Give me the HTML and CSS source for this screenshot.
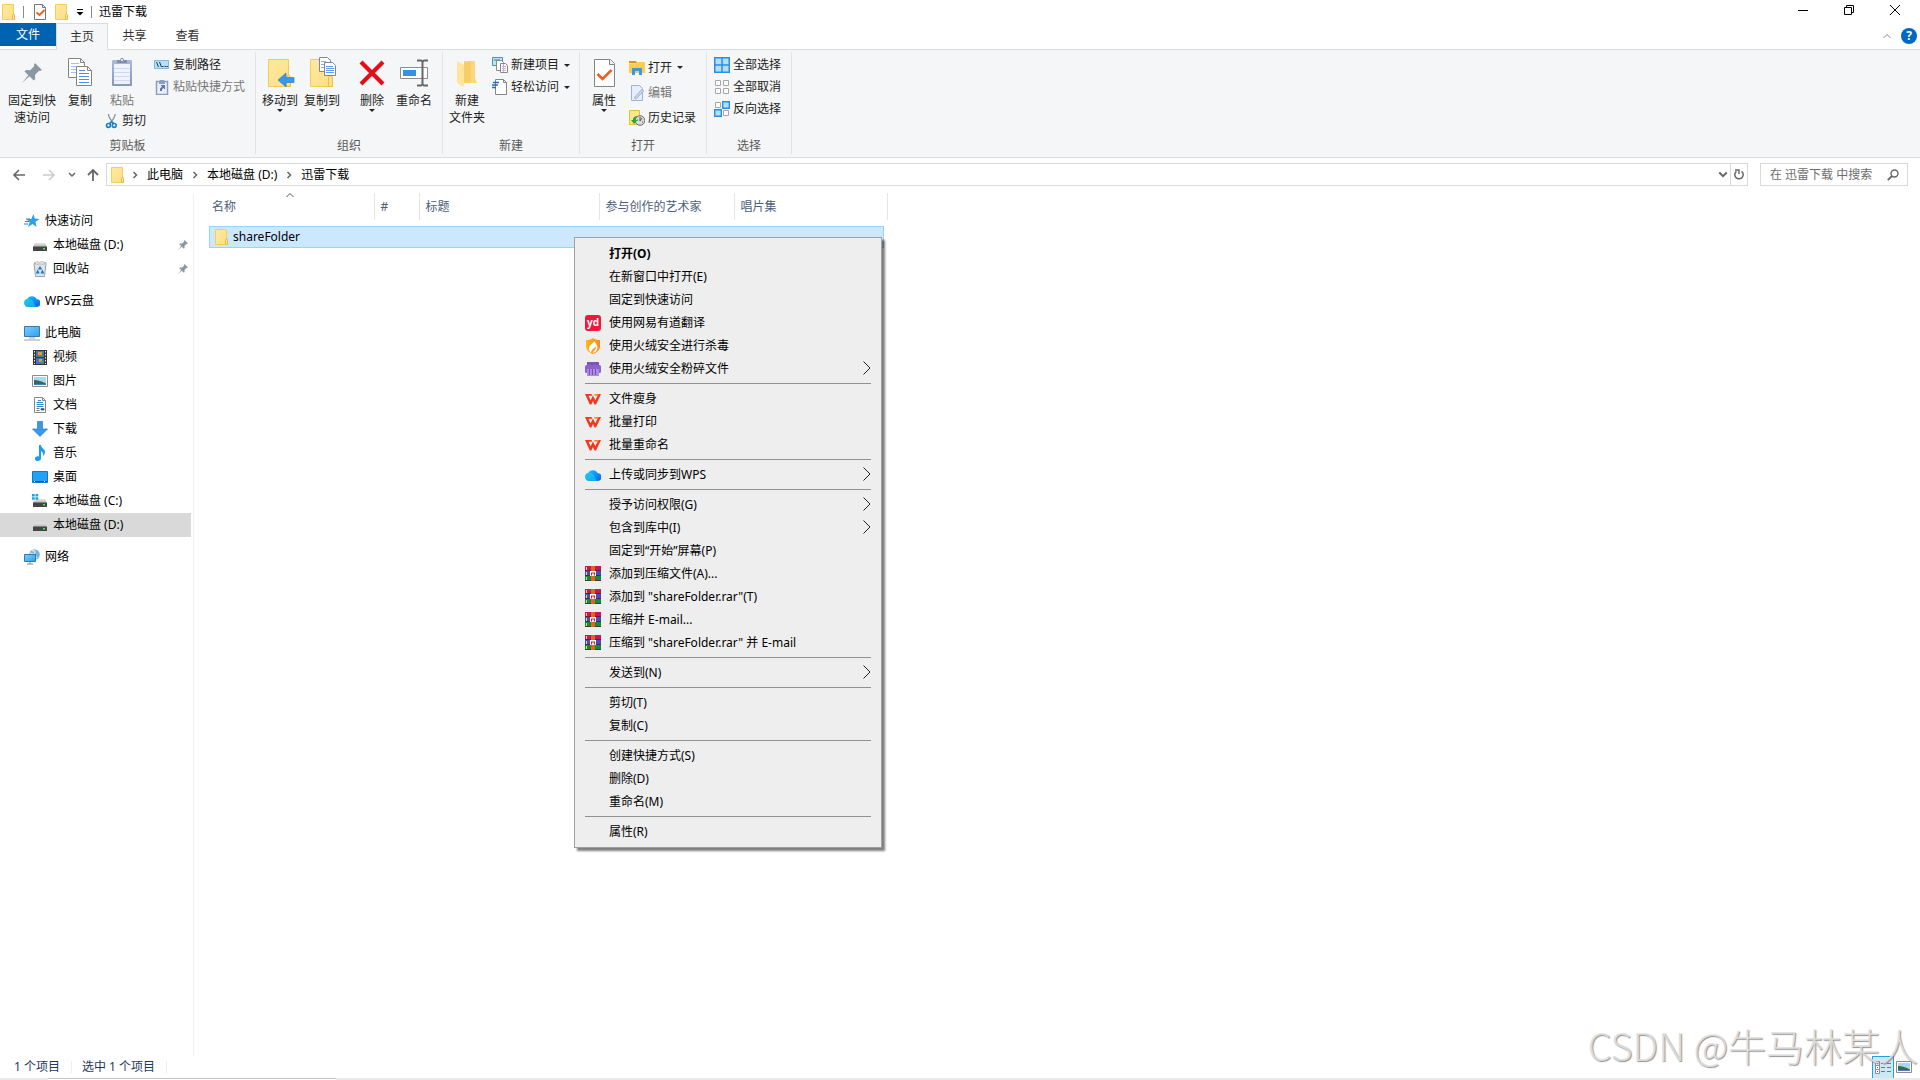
FILE: index.html
```
<!DOCTYPE html>
<html lang="zh-CN">
<head>
    <meta charset="UTF-8">
    <meta name="viewport" content="width=device-width, initial-scale=1.0">
    <title>迅雷下载</title>
    <link rel="stylesheet" href="styles.css">
</head>
<body>
    <!-- Iconos -->
    <svg class="sprite" aria-hidden="true">
        <defs>
            <linearGradient id="gFolder" x1="0" y1="0" x2="1" y2="1"><stop offset="0" stop-color="#ffe9a0"/><stop offset="1" stop-color="#fddf84"/></linearGradient>
            <linearGradient id="gBlue" x1="0" y1="0" x2="1" y2="1"><stop offset="0" stop-color="#7fcdfb"/><stop offset="1" stop-color="#2ba0f0"/></linearGradient>
            <linearGradient id="gCloud" x1="0" y1="0" x2="1" y2="1"><stop offset="0" stop-color="#15c8ff"/><stop offset="1" stop-color="#0a5cf5"/></linearGradient>
            <linearGradient id="gDrive" x1="0" y1="0" x2="0" y2="1"><stop offset="0" stop-color="#e4e4e4"/><stop offset="1" stop-color="#b5b5b5"/></linearGradient>
            <linearGradient id="gShield" x1="0" y1="0" x2="1" y2="0"><stop offset="0" stop-color="#ffb61e"/><stop offset="1" stop-color="#ff8a1c"/></linearGradient>
            <linearGradient id="gPaste" x1="0" y1="0" x2="0" y2="1"><stop offset="0" stop-color="#aabbd8"/><stop offset="1" stop-color="#8396bd"/></linearGradient>
        </defs>
        <symbol id="folder" viewBox="0 0 16 16"><path d="M1.5.5h11v10.500h1v4.500h-12z" fill="url(#gFolder)" stroke="#f2cf5b"/><path d="M11.500 15.500v-4l1-2 1 2v4z" fill="#ffe69a" stroke="#e5bd3e"/></symbol>
        <symbol id="doccheck" viewBox="0 0 16 16"><path d="M2.500.5h8l3 3v12h-11z" fill="#fafafa" stroke="#777"/><path d="M10.500.5v3h3" fill="none" stroke="#777"/><path d="M4.500 8.500l3 2.500 5-5" fill="none" stroke="#f25d1b" stroke-width="1.800"/></symbol>
        <symbol id="pin" viewBox="0 0 20 20"><path d="M13 0l7 7-2 1-1-.3-4 4.200.2 4.100-1.500 1.500-4.200-4.200L0 20l6.300-7.800L2.500 8.500 4 7l4.200.2L12.300 3 12 1.500z" fill="#8b98a3"/></symbol>
        <symbol id="copy" viewBox="0 0 32 32"><path d="M4.500 2.500h12l4 4v15h-16z" fill="#fff" stroke="#858585"/><path d="M16.500 2.500v4h4" fill="none" stroke="#858585"/><path d="M7 7.500h8M7 10.500h11M7 13.500h11M7 16.500h11" stroke="#9cc3f5"/><path d="M12.500 10.500h11l4 4v15h-15z" fill="#fff" stroke="#858585"/><path d="M23.500 10.500v4h4" fill="none" stroke="#858585"/><path d="M15 14.500h6M15 17.500h10M15 20.500h10M15 23.500h10M15 26.500h10" stroke="#4a8ef0"/></symbol>
        <symbol id="paste" viewBox="0 0 32 32"><rect x="6" y="4" width="20" height="26" rx="1" fill="url(#gPaste)"/><path d="M8 8h16v20H8z" fill="#eef3fc"/><path d="M8 12.500h16M8 16.500h16M8 20.500h16M8 24.500h16" stroke="#ccd9ee"/><path d="M11 7V4h3l1-2h2l1 2h3v3z" fill="#7e8fb0"/><circle cx="16" cy="4" r="1" fill="#fff"/></symbol>
        <symbol id="path" viewBox="0 0 16 16"><path d="M.5 3.500h14v8H.5z" fill="#b5e0fa" stroke="#81b8da"/><path d="M2.500 5l2 5M5.500 5l2 5M8 9.500h1.500M10.500 9.500H12M12.500 9.500H14" stroke="#223a55"/></symbol>
        <symbol id="pastelink" viewBox="0 0 16 16"><path d="M2.500 2.500h11v13h-11z" fill="#e9effa" stroke="#8b9ec2" stroke-width="1.500"/><path d="M5 3l1-2h4l1 2v2H5z" fill="#8b9ec2"/><path d="M6 12V9.500l2-2L6.500 6H11v4.500L9.500 9 8 10.500V12z" fill="#5f77ab"/></symbol>
        <symbol id="cut" viewBox="0 0 16 18"><path d="M4 1c0 4 3 7 6 11M11.500 1c0 4-3 7-6 11" fill="none" stroke="#8b98a3" stroke-width="1.500"/><g fill="none" stroke="#1b7fc1" stroke-width="1.800"><circle cx="4" cy="14" r="2.200"/><circle cx="10.500" cy="14" r="2.200"/><path d="M5 12l2.500-2 2 2"/></g></symbol>
        <symbol id="bigfolder" viewBox="0 0 32 32"><path d="M4.500 3.500h20v22h2v5h-22z" fill="url(#gFolder)" stroke="#f0cb58"/><path d="M22.500 30.500v-9l2-3 2 3v9z" fill="#ffe08a" stroke="#e7bf42"/></symbol>
        <symbol id="moveto" viewBox="0 0 32 32"><use href="#bigfolder"/><path d="M14 24l8-7v4.500h8v5h-8V31z" fill="#3b97e8" stroke="#2676bf" stroke-width=".6"/></symbol>
        <symbol id="copyto" viewBox="0 0 32 32"><use href="#bigfolder"/><path d="M13.500 1.500h8l3 3v11h-11z" fill="#fff" stroke="#7d8791"/><path d="M15 5.500h5M15 8.500h4M15 11.500h4" stroke="#7daef3"/><path d="M18.500 6.500h8l3 3v10h-11z" fill="#fff" stroke="#7d8791"/><path d="M20 10.500h7M20 12.500h8M20 14.500h8M20 16.500h8" stroke="#5b9bf2"/></symbol>
        <symbol id="delete" viewBox="0 0 32 32"><path d="M5 6l22 22M27 6L5 28" stroke="#e30f17" stroke-width="4.200"/></symbol>
        <symbol id="rename" viewBox="0 0 32 32"><path d="M2.500 11.500h27v11h-27z" fill="#fff" stroke="#8c8c8c"/><path d="M5 14h13v6H5z" fill="#3391e6"/><path d="M19 4.500h4l1.500 1 1.500-1h4M19 29.500h4l1.500-1 1.500 1h4M24.500 5v24" fill="none" stroke="#666" stroke-width="2"/></symbol>
        <symbol id="newfolder" viewBox="0 0 32 32"><path d="M13 5h11v17l2 5H13z" fill="#fbd67c"/><path d="M13 7l7-2v21l-7 1z" fill="#f8cd68"/><path d="M6 5l7 4v20l-1 2-6-4z" fill="#fee59b"/></symbol>
        <symbol id="newitem" viewBox="0 0 16 16"><path d="M.5.5h10v8H.5z" fill="#bfe3f5" stroke="#4b93b8"/><path d="M2 3h6" stroke="#3c7798"/><path d="M4.500 3.500h5l2 2v8h-7z" fill="#fff" stroke="#888"/><path d="M8.500 6.500h5l2 2v7h-7z" fill="#fff" stroke="#888"/><path d="M10 9.500h4M10 11.500h4M10 13.500h4" stroke="#a7bfea"/><path d="M11.500 7v8" stroke="#f1a8a8"/></symbol>
        <symbol id="easy" viewBox="0 0 16 16"><path d="M3.500.5h8l3 3v12h-11z" fill="#fff" stroke="#858585"/><path d="M11.500.5v3h3" fill="none" stroke="#858585"/><path d="M1 3.500h6M0 6h6M0 8.500h4" stroke="#1f72b8" stroke-width="1.400"/></symbol>
        <symbol id="props" viewBox="0 0 32 32"><path d="M6.500 3.500h16l4 4v23h-20z" fill="#fff" stroke="#858585"/><path d="M21.500 3.500v5h5" fill="#eee" stroke="#858585"/><path d="M9.500 18l5 5 9-9" fill="none" stroke="#f25d1b" stroke-width="2.500"/></symbol>
        <symbol id="open" viewBox="0 0 16 16"><path d="M0 1h7l1 2h-8z" fill="#d59a12"/><path d="M0 3.500L8 3l1-1h7v11H0z" fill="#fecb52"/><path d="M3 15V8h10v7h-3v-4H6v4z" fill="#3b97e8"/></symbol>
        <symbol id="edit" viewBox="0 0 16 16"><path d="M2.500.5h8l3 3v12h-11z" fill="#e6eefb" stroke="#9fb1d4"/><path d="M5 13l8-9 2 2-8 8z" fill="#c5d2e9" stroke="#93a6cb" stroke-width=".7"/></symbol>
        <symbol id="history" viewBox="0 0 16 16"><path d="M.5.5h10v14H.5z" fill="#fde58c" stroke="#e4bc3f"/><circle cx="11" cy="10.500" r="4.800" fill="#dadada" stroke="#6a6a6a"/><path d="M11 7v4l2-3M8 10h1M13 12h1" fill="none" stroke="#555"/><path d="M2 10h2c0-3 2-4 5-4-2 1-3 2-2.500 4h2L5 14z" fill="#29a636"/></symbol>
        <symbol id="selall" viewBox="0 0 16 16"><path d="M.75.75h14.500v14.500H.75zM8 1v14M1 8h14" fill="#b3defc" stroke="#2b8fde" stroke-width="1.500"/></symbol>
        <symbol id="selnone" viewBox="0 0 16 16"><path d="M1.500 1.500h5v5h-5zM9.500 1.500h5v5h-5zM1.500 9.500h5v5h-5zM9.500 9.500h5v5h-5z" fill="#fff" stroke="#a6a6a6"/></symbol>
        <symbol id="selinv" viewBox="0 0 16 16"><path d="M1.500 1.500h5v5h-5zM9.500 9.500h5v5h-5z" fill="#fff" stroke="#a6a6a6"/><path d="M8.700.7h6.600v6.600H8.700zM.7 8.700h6.600v6.600H.7z" fill="#b3defc" stroke="#2b8fde" stroke-width="1.400"/></symbol>
        <symbol id="left" viewBox="0 0 14 14"><path d="M7 2L2 7l5 5M2 7h11" fill="none" stroke="currentColor" stroke-width="1.600"/></symbol>
        <symbol id="right" viewBox="0 0 14 14"><path d="M7 2l5 5-5 5M12 7H1" fill="none" stroke="currentColor" stroke-width="1.600"/></symbol>
        <symbol id="up" viewBox="0 0 14 14"><path d="M2 7l5-5 5 5M7 2v11" fill="none" stroke="currentColor" stroke-width="1.800"/></symbol>
        <symbol id="chevdown" viewBox="0 0 8 8"><path d="M1 2l3 3 3-3" fill="none" stroke="currentColor" stroke-width="1.500"/></symbol>
        <symbol id="chevup" viewBox="0 0 8 8"><path d="M.5 6L4 2.500 7.500 6" fill="none" stroke="currentColor"/></symbol>
        <symbol id="chevright" viewBox="0 0 8 8"><path d="M2.500 1l3 3-3 3" fill="none" stroke="currentColor" stroke-width="1.500"/></symbol>
        <symbol id="submenu" viewBox="0 0 8 14"><path d="M.5.5L7 7 .5 13.500" fill="none" stroke="#222"/></symbol>
        <symbol id="refresh" viewBox="0 0 12 12"><path d="M8.500 2.300A4.200 4.200 0 1 1 3.500 2.300" fill="none" stroke="#666" stroke-width="1.500"/><path d="M2 1h4v4" fill="none" stroke="#666" stroke-width="1.400"/></symbol>
        <symbol id="search" viewBox="0 0 12 12"><circle cx="7.500" cy="4.500" r="3.500" fill="none" stroke="#666" stroke-width="1.400"/><path d="M5 7L.8 11.200" stroke="#666" stroke-width="1.800"/></symbol>
        <symbol id="star" viewBox="0 0 16 16"><path d="M9.500 1l1.300 4.500L15.500 6l-4 2.800 1 5.200-4-3-4.500 3 1.700-5L2.500 6h4.800z" fill="#2ba1ec"/><path d="M1 8.500h4M0 11h4M2 6h4" stroke="#2684c9"/></symbol>
        <symbol id="drive" viewBox="0 0 16 16"><path d="M3 6h10l2 4H1z" fill="url(#gDrive)"/><path d="M1 9.500h14v4.500H1z" fill="#454545"/><path d="M11 11h2v1.500h-2z" fill="#3bea4b"/></symbol>
        <symbol id="drivec" viewBox="0 0 16 16"><use href="#drive"/><path d="M0 1h6v6H0z" fill="#fff"/><path d="M0 1h2.700v2.500H0zM3.500 1h2.700v2.500H3.500zM0 4.300h2.700v2.500H0zM3.500 4.300h2.700v2.500H3.500z" fill="#15a5e8"/></symbol>
        <symbol id="bin" viewBox="0 0 16 16"><path d="M2 2.500L14 2l-1.500 13.500h-9z" fill="#dce3e9" stroke="#9aa3aa"/><path d="M2 2l3-1.500 2 1 3-1 4 1.500-2 1H4z" fill="#eef1f3" stroke="#a5a5a5" stroke-width=".7"/><path d="M8 5l2.200 3.500H5.800zM5.700 8.500l2 4H3.800zM10.300 8.500l2 4H8.500z" fill="#1c76c9"/></symbol>
        <symbol id="cloud" viewBox="0 0 16 16"><path d="M4.200 14a4.200 4.200 0 0 1-.7-8.300A5.200 5.200 0 0 1 12.500 6a4 4 0 0 1 0 8z" fill="url(#gCloud)"/><path d="M3.800 5.700c2.500-.3 4.500 1 5.500 3.300s2 4 3 5H4.200a4.200 4.200 0 0 1-.4-8.300z" fill="#1de0dc" opacity=".5"/></symbol>
        <symbol id="pc" viewBox="0 0 16 16"><path d="M.5 1.500h15v10H.5z" fill="url(#gBlue)" stroke="#3479a8"/><path d="M5 13h6M0 15h16" stroke="#93a5b2"/></symbol>
        <symbol id="video" viewBox="0 0 16 16"><path d="M1 1h14v15H1z" fill="#333"/><path d="M4 2h8v6H4zM4 9h8v6H4z" fill="#4573c8"/><path d="M6 3h4v3H6zM7 10h3v3H7z" fill="#e2a02a"/><path d="M7 6h4v2H7zM9 12h3v2H9z" fill="#4b9a44"/><path d="M2.500 2v13M13.500 2v13" stroke="#eee" stroke-dasharray="1.500 1.500"/></symbol>
        <symbol id="picture" viewBox="0 0 16 16"><path d="M.5 2.500h15v11H.5z" fill="#fff" stroke="#8c8c8c"/><path d="M2 4h12v8H2z" fill="#a5daf6"/><path d="M2 7c4 0 8 1.500 12 3.500v.5H2z" fill="#3c665c"/><path d="M2 11h12v1H2z" fill="#3f83b8"/></symbol>
        <symbol id="doc" viewBox="0 0 16 16"><path d="M2.500.5h8l3 3v12h-11z" fill="#fff" stroke="#858585"/><path d="M10.500.5v3h3" fill="none" stroke="#858585"/><path d="M6 3.500h3M4.500 5.500H11M4.500 7.500h7M4.500 9.500h7" stroke="#2a8bd6"/><path d="M4.500 11.500h3M4.500 13.500h3M9 11.500h3v1.500H9z" stroke="#62788a"/></symbol>
        <symbol id="download" viewBox="0 0 16 16"><path d="M5.500.5h5V8h5L8 15.500.5 8h5z" fill="#3b97e8" stroke="#2b78c0" stroke-width=".7"/></symbol>
        <symbol id="music" viewBox="0 0 16 16"><path d="M7 0h2c0 3 4 4 4 7 0 2-1 3-2 4 .5-3-.5-4-2-5v7.500C9 15 7.500 16 5.500 16S3 15 3 13.500 5 11 7 11.500z" fill="#1a9cf0"/></symbol>
        <symbol id="desktop" viewBox="0 0 16 16"><path d="M.5 2.500h15v11H.5z" fill="#23a1f7" stroke="#0e79c9"/><path d="M1 12.500h14" stroke="#0b5e9c"/><path d="M2 12.500h1M12 12.500h1" stroke="#fff"/></symbol>
        <symbol id="network" viewBox="0 0 16 16"><circle cx="10.500" cy="5.500" r="5.300" fill="#76b4d9"/><path d="M8 2c3-1 4 1 2 3s2 2 3 4M6 4l3 1" stroke="#d9ebf5" fill="none" stroke-width="1.300"/><path d="M.5 5.500h11v7H.5z" fill="url(#gBlue)" stroke="#3479a8"/><path d="M3 15h6M6 13v2" stroke="#6f8c9f"/></symbol>
        <symbol id="flame" viewBox="0 0 16 16"><path d="M1 2c3 0 5-.5 7-2 2 1.500 4 2 7 2v6c0 4-3 6.500-7 8-4-1.500-7-4-7-8z" fill="url(#gShield)"/><path d="M9 3c0 2-4.500 4-5 7-.3 2 .5 3.500 2 4.500 0-2 2-4 5-6C11 11 9 13 7.500 15c3-.5 5-2.500 5-5.500C12.500 7 10.500 5 9 3z" fill="#fff"/></symbol>
        <symbol id="shred" viewBox="0 0 16 16"><path d="M2 1h12v5H2z" fill="#7c54b8"/><rect y="4" width="16" height="8" rx="1.500" fill="#8c62cb"/><path d="M2 8h12v7H2z" fill="#ad8ae4"/><path d="M4.500 8v6M7.500 8v6M10.500 8v6" stroke="#7a52b6"/></symbol>
        <symbol id="wps" viewBox="0 0 16 16"><path d="M0 3h6.500l1 1.700h-4L5.600 9.300 8 4.500l2.300 4.800L13.400 3H16l-5 10.500h-1.500L8 10l-1.700 3.500H4.800z" fill="#f5361c"/><path d="M9 3h5l-1 1.700h-3.200z" fill="#ff8530"/></symbol>
        <symbol id="rar" viewBox="0 0 16 16"><path d="M0 0h16v5H0z" fill="#c2185b"/><path d="M0 5h16v5H0z" fill="#3f51b5"/><path d="M0 10h16v5H0z" fill="#158a3e"/><path d="M0 4.500h16M0 9.500h16M0 14.500h16" stroke="#4a1733" stroke-width=".7"/><path d="M1.500 1v3M1.500 6v3M1.500 11v3" stroke="#f2d64b"/><path d="M6 0h4v15H6z" fill="#e0641c"/><path d="M5 5h6v5H5z" fill="#fff"/><path d="M6.500 9.500V7h3v2.500" fill="none" stroke="#c62828" stroke-width="1.200"/></symbol>
    </svg>

    <header class="titlebar">
        <svg class="icon"><use href="#folder"/></svg>
        <span class="title-sep"></span>
        <button class="quick" aria-label="属性"><svg class="icon"><use href="#doccheck"/></svg></button>
        <button class="quick" aria-label="新建文件夹"><svg class="icon"><use href="#folder"/></svg></button>
        <button aria-label="自定义"><svg width="8" height="8" viewBox="0 0 8 8"><path d="M1 1.500h6" stroke="#000"/><path d="M.5 4h7L4 7.500z"/></svg></button>
        <span class="title-sep near"></span>
        <span class="title">迅雷下载</span>
        <div class="controls">
            <button aria-label="最小化"><svg width="10" height="10"><path d="M0 5.500h10" stroke="#000"/></svg></button>
            <button aria-label="还原"><svg width="10" height="10"><path d="M.5 2.500h7v7h-7zM2.500 2.500v-2h7v7h-2" fill="none" stroke="#000"/></svg></button>
            <button aria-label="关闭"><svg width="10" height="10"><path d="M0 0l10 10M10 0L0 10" stroke="#000"/></svg></button>
        </div>
    </header>

    <nav class="tabs">
        <button class="tab file">文件</button>
        <button class="tab active">主页</button>
        <button class="tab">共享</button>
        <button class="tab">查看</button>
        <div class="help">
            <button aria-label="折叠功能区"><svg class="icon-8"><use href="#chevup"/></svg></button>
            <button class="help-btn" aria-label="帮助">?</button>
        </div>
    </nav>

    <section class="ribbon">
        <div class="group g-clip">
            <div class="group-body">
                <button class="big wide"><svg class="big-icon" viewBox="0 0 32 32"><use href="#pin" x="6" y="7" width="20" height="20"/></svg>固定到快<br>速访问</button>
                <button class="big"><svg class="big-icon"><use href="#copy"/></svg>复制</button>
                <div class="stack">
                    <button class="big off"><svg class="big-icon"><use href="#paste"/></svg>粘贴</button>
                    <button class="small cut"><svg class="icon"><use href="#cut"/></svg>剪切</button>
                </div>
                <div class="list">
                    <button class="small"><svg class="icon"><use href="#path"/></svg>复制路径</button>
                    <button class="small off"><svg class="icon"><use href="#pastelink"/></svg>粘贴快捷方式</button>
                </div>
            </div>
            <div class="group-name">剪贴板</div>
        </div>
        <div class="group g-org">
            <div class="group-body">
                <button class="big"><svg class="big-icon"><use href="#moveto"/></svg>移动到<i class="arrow"></i></button>
                <button class="big"><svg class="big-icon"><use href="#copyto"/></svg>复制到<i class="arrow"></i></button>
                <span class="inner-sep"></span>
                <button class="big"><svg class="big-icon"><use href="#delete"/></svg>删除<i class="arrow"></i></button>
                <button class="big"><svg class="big-icon"><use href="#rename"/></svg>重命名</button>
            </div>
            <div class="group-name">组织</div>
        </div>
        <div class="group g-new">
            <div class="group-body">
                <button class="big"><svg class="big-icon"><use href="#newfolder"/></svg>新建<br>文件夹</button>
                <div class="list">
                    <button class="small"><svg class="icon"><use href="#newitem"/></svg>新建项目<i class="arrow"></i></button>
                    <button class="small"><svg class="icon"><use href="#easy"/></svg>轻松访问<i class="arrow"></i></button>
                </div>
            </div>
            <div class="group-name">新建</div>
        </div>
        <div class="group g-open">
            <div class="group-body">
                <button class="big"><svg class="big-icon"><use href="#props"/></svg>属性<i class="arrow"></i></button>
                <div class="list loose">
                    <button class="small"><svg class="icon"><use href="#open"/></svg>打开<i class="arrow"></i></button>
                    <button class="small off"><svg class="icon"><use href="#edit"/></svg>编辑</button>
                    <button class="small"><svg class="icon"><use href="#history"/></svg>历史记录</button>
                </div>
            </div>
            <div class="group-name">打开</div>
        </div>
        <div class="group g-select">
            <div class="group-body">
                <div class="list">
                    <button class="small"><svg class="icon"><use href="#selall"/></svg>全部选择</button>
                    <button class="small"><svg class="icon"><use href="#selnone"/></svg>全部取消</button>
                    <button class="small"><svg class="icon"><use href="#selinv"/></svg>反向选择</button>
                </div>
            </div>
            <div class="group-name">选择</div>
        </div>
    </section>

    <div class="addressbar">
        <div class="history">
            <button aria-label="后退"><svg class="icon-14"><use href="#left"/></svg></button>
            <button class="dim" aria-label="前进"><svg class="icon-14"><use href="#right"/></svg></button>
            <button class="recent" aria-label="最近浏览的位置"><svg class="icon-8"><use href="#chevdown"/></svg></button>
            <button aria-label="上移"><svg class="icon-14"><use href="#up"/></svg></button>
        </div>
        <div class="path">
            <svg class="icon"><use href="#folder"/></svg>
            <svg class="icon-8"><use href="#chevright"/></svg>
            <a href="#">此电脑</a>
            <svg class="icon-8"><use href="#chevright"/></svg>
            <a href="#">本地磁盘 (D:)</a>
            <svg class="icon-8"><use href="#chevright"/></svg>
            <a href="#">迅雷下载</a>
            <button class="drop" aria-label="以前的位置"><svg width="10" height="10"><use href="#chevdown"/></svg></button>
            <button class="refresh" aria-label="刷新"><svg width="12" height="12"><use href="#refresh"/></svg></button>
        </div>
        <form class="search">
            <input type="text" aria-label="搜索" placeholder="在 迅雷下载 中搜索">
            <svg width="12" height="12"><use href="#search"/></svg>
        </form>
    </div>

    <main class="main">
        <nav class="tree">
            <ul>
                <li><a href="#"><svg class="icon"><use href="#star"/></svg>快速访问</a></li>
                <li class="sub"><a href="#"><svg class="icon"><use href="#drive"/></svg>本地磁盘 (D:)<svg class="pinned"><use href="#pin"/></svg></a></li>
                <li class="sub"><a href="#"><svg class="icon"><use href="#bin"/></svg>回收站<svg class="pinned"><use href="#pin"/></svg></a></li>
            </ul>
            <ul>
                <li><a href="#"><svg class="icon"><use href="#cloud"/></svg>WPS云盘</a></li>
            </ul>
            <ul>
                <li><a href="#"><svg class="icon"><use href="#pc"/></svg>此电脑</a></li>
                <li class="sub"><a href="#"><svg class="icon"><use href="#video"/></svg>视频</a></li>
                <li class="sub"><a href="#"><svg class="icon"><use href="#picture"/></svg>图片</a></li>
                <li class="sub"><a href="#"><svg class="icon"><use href="#doc"/></svg>文档</a></li>
                <li class="sub"><a href="#"><svg class="icon"><use href="#download"/></svg>下载</a></li>
                <li class="sub"><a href="#"><svg class="icon"><use href="#music"/></svg>音乐</a></li>
                <li class="sub"><a href="#"><svg class="icon"><use href="#desktop"/></svg>桌面</a></li>
                <li class="sub"><a href="#"><svg class="icon"><use href="#drivec"/></svg>本地磁盘 (C:)</a></li>
                <li class="sub"><a href="#" class="current"><svg class="icon"><use href="#drive"/></svg>本地磁盘 (D:)</a></li>
            </ul>
            <ul>
                <li><a href="#"><svg class="icon"><use href="#network"/></svg>网络</a></li>
            </ul>
        </nav>

        <div class="files">
            <table>
                <colgroup>
                    <col class="c-name"><col class="c-num"><col class="c-title"><col class="c-artist"><col class="c-album">
                </colgroup>
                <thead>
                    <tr>
                        <th>名称<svg class="sort"><use href="#chevup"/></svg></th>
                        <th>#</th>
                        <th>标题</th>
                        <th>参与创作的艺术家</th>
                        <th>唱片集</th>
                    </tr>
                </thead>
                <tbody>
                    <tr>
                        <td colspan="5"><div class="file-row"><svg class="icon"><use href="#folder"/></svg>shareFolder</div></td>
                    </tr>
                </tbody>
            </table>
        </div>
    </main>

    <footer class="status">
        <span>1 个项目</span>
        <span>选中 1 个项目</span>
        <div class="views">
            <button class="on" aria-label="详细信息"><svg width="16" height="14"><path d="M.5.5h4v4h-4zM.5 4.500h4v4h-4zM.5 8.500h4v4h-4z" fill="#fff" stroke="#8c8c8c"/><path d="M2 2.500h1M2 6.500h1" stroke="#2a6fc0"/><path d="M2 10.500h1" stroke="#d22"/><path d="M6 2.500h4M12 2.500h4M6 6.500h4M12 6.500h4M6 10.500h4M12 10.500h4" stroke="#777"/></svg></button>
            <button aria-label="大图标"><svg class="icon"><use href="#picture"/></svg></button>
        </div>
    </footer>
    <div class="bottom-edge"><span></span></div>

    <!-- Menú contextual -->
    <div class="menu" role="menu">
        <button><b>打开(O)</b></button>
        <button>在新窗口中打开(E)</button>
        <button>固定到快速访问</button>
        <button><span class="yd">yd</span>使用网易有道翻译</button>
        <button><svg class="icon"><use href="#flame"/></svg>使用火绒安全进行杀毒</button>
        <button><svg class="icon"><use href="#shred"/></svg>使用火绒安全粉碎文件<svg class="more"><use href="#submenu"/></svg></button>
        <hr>
        <button><svg class="icon"><use href="#wps"/></svg>文件瘦身</button>
        <button><svg class="icon"><use href="#wps"/></svg>批量打印</button>
        <button><svg class="icon"><use href="#wps"/></svg>批量重命名</button>
        <hr>
        <button><svg class="icon"><use href="#cloud"/></svg>上传或同步到WPS<svg class="more"><use href="#submenu"/></svg></button>
        <hr>
        <button>授予访问权限(G)<svg class="more"><use href="#submenu"/></svg></button>
        <button>包含到库中(I)<svg class="more"><use href="#submenu"/></svg></button>
        <button>固定到“开始”屏幕(P)</button>
        <button><svg class="icon"><use href="#rar"/></svg>添加到压缩文件(A)...</button>
        <button><svg class="icon"><use href="#rar"/></svg>添加到 "shareFolder.rar"(T)</button>
        <button><svg class="icon"><use href="#rar"/></svg>压缩并 E-mail...</button>
        <button><svg class="icon"><use href="#rar"/></svg>压缩到 "shareFolder.rar" 并 E-mail</button>
        <hr>
        <button>发送到(N)<svg class="more"><use href="#submenu"/></svg></button>
        <hr>
        <button>剪切(T)</button>
        <button>复制(C)</button>
        <hr>
        <button>创建快捷方式(S)</button>
        <button>删除(D)</button>
        <button>重命名(M)</button>
        <hr>
        <button>属性(R)</button>
    </div>

    <div class="watermark">CSDN @牛马林某人</div>
</body>
</html>
```
FILE: styles.css
```
* {
    box-sizing: border-box;
}
body {
    margin: 0;
    min-height: 100vh;
    display: flex;
    flex-direction: column;
    position: relative;
    background: #fff;
    color: #000;
    font: 12px/16px "Noto Sans", "Noto Sans CJK SC", sans-serif;
}
button {
    font: inherit;
    color: inherit;
    background: none;
    border: none;
    padding: 0;
    white-space: nowrap;
}
a {
    color: inherit;
    text-decoration: none;
}
svg {
    display: block;
    flex: none;
}
.sprite {
    position: absolute;
    width: 0;
    height: 0;
}
.icon {
    width: 16px;
    height: 16px;
}
.icon-14 {
    width: 14px;
    height: 14px;
}
.icon-8 {
    width: 8px;
    height: 8px;
}

/* Barra de título */
.titlebar {
    display: flex;
    align-items: center;
    height: 23px;
    padding-left: 1px;
}
.title-sep {
    width: 1px;
    height: 12px;
    margin: 0 8px 0 6px;
    background: #8a8a8a;
}
.title-sep.near {
    margin: 0 7px;
}
.quick {
    margin-right: 6px;
}
.controls {
    display: flex;
    align-self: flex-start;
    margin-left: auto;
    padding-right: 2px;
}
.controls button {
    display: flex;
    align-items: center;
    justify-content: center;
    width: 46px;
    height: 20px;
}

/* Pestañas */
.tabs {
    display: flex;
    height: 27px;
    border-bottom: 1px solid #dadbdc;
}
.tab {
    width: 53px;
    height: 26px;
    color: #333;
}
.tab.file {
    width: 56px;
    height: 23px;
    background: #0063b1;
    color: #fff;
}
.tab.active {
    width: 52px;
    height: 27px;
    background: #f5f6f7;
    border: 1px solid #dadbdc;
    border-bottom: none;
}
.help {
    display: flex;
    align-items: center;
    gap: 10px;
    margin-left: auto;
    padding-right: 3px;
    color: #888;
}
.help-btn {
    width: 16px;
    height: 16px;
    border-radius: 8px;
    background: #0067c4;
    color: #fff;
    font-weight: bold;
    line-height: 16px;
}

/* Cinta de opciones */
.ribbon {
    display: flex;
    height: 108px;
    padding-top: 2px;
    background: #f5f6f7;
    border-bottom: 1px solid #dadbdc;
    color: #222;
}
.group {
    display: flex;
    flex-direction: column;
    height: 102px;
    border-right: 1px solid #e2e3e4;
}
.group-body {
    display: flex;
    flex: 1;
    padding: 2px 6px 0;
}
.group-name {
    height: 16px;
    color: #5a5a5a;
    text-align: center;
}
.g-clip {
    width: 256px;
}
.g-clip .group-body {
    padding-left: 8px;
}
.g-org {
    width: 187px;
}
.g-new {
    width: 137px;
}
.g-open {
    width: 127px;
}
.g-select {
    width: 85px;
}
.g-select .group-body {
    padding-left: 7px;
}
.big {
    display: flex;
    flex-direction: column;
    align-items: center;
    align-self: flex-start;
    min-width: 36px;
    padding-top: 2px;
    line-height: 17px;
}
.g-clip .big,
.g-org .big {
    margin-right: 6px;
}
.big.wide {
    width: 48px;
}
.big-icon {
    width: 32px;
    height: 32px;
    margin-bottom: 4px;
}
.off {
    color: #777;
}
.arrow {
    width: 0;
    height: 0;
    margin-left: 2px;
    border: 3px solid transparent;
    border-top-color: #222;
    border-bottom: none;
}
.big .arrow {
    margin: 0;
}
.small {
    display: flex;
    align-items: center;
    gap: 3px;
    height: 22px;
}
.small.cut {
    gap: 2px;
    height: 20px;
}
.stack .big {
    height: 57px;
}
.list {
    margin-left: 7px;
}
.g-clip .list {
    margin-left: 8px;
}
.g-select .list {
    margin-left: 0;
}
.list.loose {
    padding-top: 1px;
}
.loose .small {
    height: 25px;
}
.inner-sep {
    width: 1px;
    height: 55px;
    margin: 11px 6px 0 2px;
    background: #dcdddf;
}

/* Barra de direcciones */
.addressbar {
    display: flex;
    align-items: center;
    height: 33px;
    padding: 0 12px;
}
.history {
    display: flex;
    align-items: center;
    width: 94px;
    color: #666;
}
.history .dim {
    margin: 0 12px 0 16px;
    color: #ccc;
}
.history .recent {
    margin-right: 10px;
}
.path {
    display: flex;
    flex: 1;
    align-items: center;
    gap: 8px;
    height: 23px;
    padding-left: 3px;
    border: 1px solid #d9d9d9;
}
.path .icon {
    margin-right: -3px;
}
.path .icon-8 {
    color: #666;
}
.path .drop {
    margin-left: auto;
    color: #666;
}
.refresh {
    display: flex;
    align-items: center;
    justify-content: center;
    width: 17px;
    height: 21px;
    margin-left: -6px;
    border-left: 1px solid #d9d9d9;
}
.search {
    display: flex;
    align-items: center;
    width: 148px;
    height: 23px;
    margin-left: 12px;
    padding: 0 8px 0 9px;
    border: 1px solid #d9d9d9;
}
.search input {
    flex: 1;
    min-width: 0;
    padding: 0;
    border: none;
    outline: none;
    font: inherit;
}
.search input::placeholder {
    color: #6d6d6d;
}

/* Panel lateral */
.main {
    display: flex;
    flex: 1;
    padding-top: 2px;
}
.tree {
    width: 194px;
    padding: 16px 2px 0 0;
    border-right: 1px solid #f0f0f0;
}
.tree ul {
    list-style: none;
    margin: 0 0 8px;
    padding: 0;
}
.tree a {
    display: flex;
    align-items: center;
    gap: 5px;
    height: 24px;
    padding-left: 24px;
}
.tree .sub a {
    padding-left: 32px;
}
.tree .current {
    background: #d9d9d9;
}
.tree .pinned {
    width: 10px;
    height: 10px;
    margin: 0 3px 0 auto;
}

/* Lista de archivos */
.files {
    flex: 1;
    padding-left: 15px;
}
table {
    width: 678px;
    table-layout: fixed;
    border-collapse: collapse;
}
.c-name {
    width: 165px;
}
.c-num {
    width: 45px;
}
.c-title {
    width: 180px;
}
.c-artist {
    width: 135px;
}
.c-album {
    width: 153px;
}
th {
    position: relative;
    height: 27px;
    padding: 0 0 0 6px;
    border-right: 1px solid #e5e5e5;
    color: #4c607a;
    font-weight: normal;
    text-align: left;
}
th:first-child {
    padding-left: 3px;
}
.sort {
    position: absolute;
    top: -2px;
    left: 77px;
    width: 8px;
    height: 8px;
    color: #555;
}
td {
    padding: 6px 3px 0 0;
}
.file-row {
    display: flex;
    align-items: center;
    gap: 3px;
    height: 22px;
    padding-left: 4px;
    background: #cce8ff;
    border: 1px solid #99d1ff;
}

/* Barra de estado */
.status {
    display: flex;
    align-items: center;
    height: 22px;
    padding-left: 14px;
    color: #1e395b;
}
.status span {
    margin-right: 10px;
    padding-right: 11px;
    border-right: 1px solid #eee;
    line-height: 12px;
}
.views {
    display: flex;
    height: 22px;
    margin-left: auto;
    padding-right: 6px;
}
.views button {
    display: flex;
    align-items: center;
    justify-content: center;
    width: 20px;
}
.views .on {
    width: 22px;
    background: #cbe8f6;
    border: 1px solid #26a0da;
    border-bottom: none;
}
.bottom-edge {
    height: 2px;
    padding-left: 48px;
    background: #e9e9e9;
}
.bottom-edge span {
    display: block;
    width: 288px;
    height: 2px;
    background: #fff;
    border-top: 1px solid #c4c4c4;
}

/* Menú contextual */
.menu {
    position: absolute;
    top: 237px;
    left: 574px;
    width: 308px;
    padding: 4px 10px;
    background: #eee;
    border: 1px solid #a0a0a0;
    box-shadow: 3px 3px 2px rgba(0, 0, 0, 0.5);
}
.menu button {
    display: flex;
    align-items: center;
    width: 100%;
    height: 23px;
    padding-left: 24px;
}
.menu .icon,
.menu .yd {
    width: 16px;
    height: 16px;
    margin: 0 8px 0 -24px;
}
.menu .yd {
    border-radius: 3px;
    background: #f5163b;
    color: #fff;
    font-size: 10px;
    font-weight: bold;
    line-height: 14px;
}
.menu .more {
    width: 8px;
    height: 14px;
    margin: 0 0 2px auto;
}
.menu hr {
    height: 1px;
    margin: 3px 0;
    border: none;
    background: #919191;
}

.watermark {
    position: absolute;
    right: 2px;
    bottom: 11px;
    color: rgba(225, 225, 225, 0.9);
    font: 300 38px/48px "Noto Sans CJK SC", sans-serif;
    text-shadow: 1px 1px 1px rgba(120, 120, 120, 0.8);
    white-space: nowrap;
}
```
